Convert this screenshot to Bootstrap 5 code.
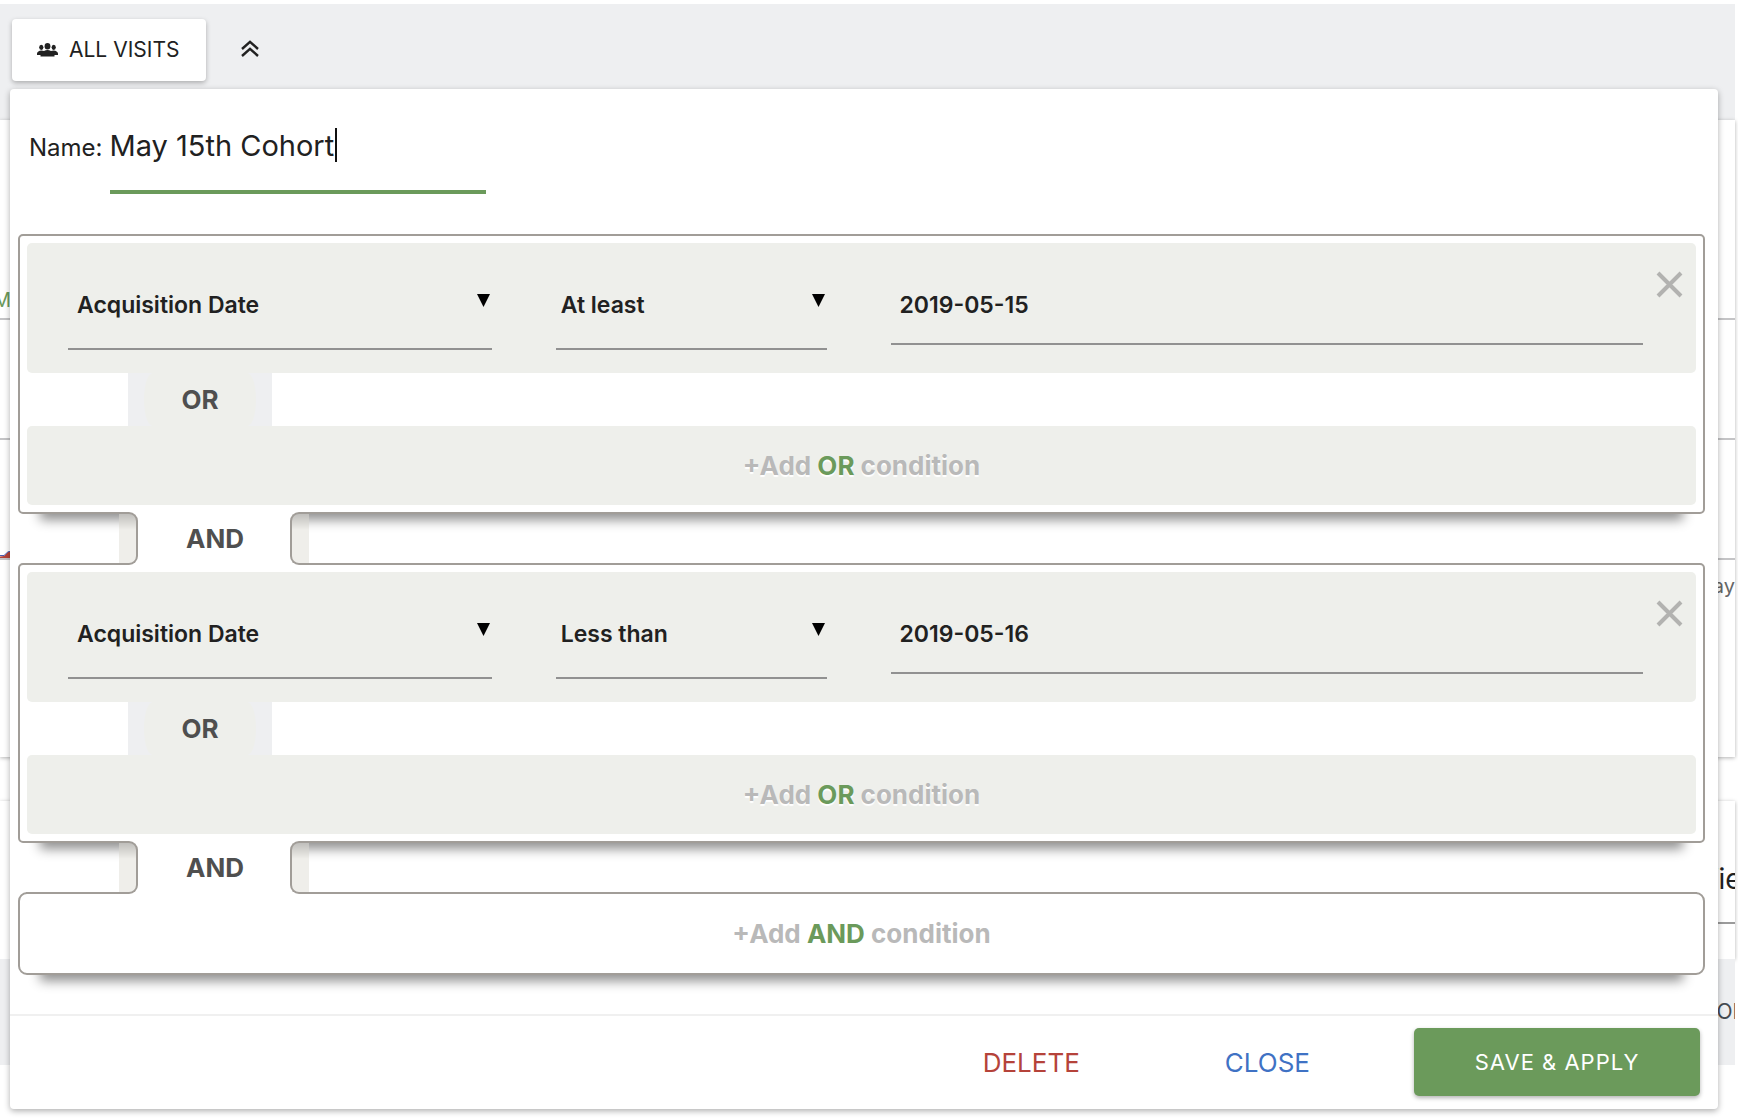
<!DOCTYPE html>
<html lang="en">
<head>
<meta charset="utf-8">
<meta name="viewport" content="width=device-width, initial-scale=1">
<title>Segment editor</title>
<link href="https://cdn.jsdelivr.net/npm/bootstrap@5.3.0/dist/css/bootstrap.min.css" rel="stylesheet">
<style>
:root{--ink:#212121;--green:#6b9a5b;--line:#a19d98;--sand:#eeefeb;--mist:#eeeff1}
body{font-family:Inter,Roboto,sans-serif;color:var(--ink);background:#fff}
.stage{padding:4px 3px 0 0;min-height:100vh}
.topbar{height:116px;background:var(--mist);padding:15px 12px}
.visits-btn{height:62px;padding:0 27px 0 25px;border:0;border-radius:4px;background:#fff;font-size:21px;color:var(--ink);gap:11px;box-shadow:0 2px 5px rgba(0,0,0,.28)}
.collapse-btn{border:0;background:none;padding:0;margin-left:35px;height:56px}
.behind{background:#fff;overflow:hidden;box-shadow:0 1px 4px rgba(0,0,0,.3)}
.chart-bg{height:637px}
.chart-bg .strip{height:120px;border-bottom:2px solid #c4c4c6}
.chart-bg .strip-first{height:200px;padding-bottom:3px;color:var(--green);font-size:20px}
.chart-bg .strip-first span{margin-left:-7px}
.chart-bg .axis{padding-top:11px;color:#666;font-size:20px}
.table-bg{height:158px;margin-top:44px}
.table-bg .strip{height:123px;margin-left:30px;padding-bottom:22px;border-bottom:2px solid #9b9b9b;font-size:28px}
.table-bg .strip span{margin-right:-29px}
.foot-bg{height:106px;background:var(--mist);overflow:hidden;font-size:21px;color:#444a50}
.foot-bg span{margin-right:-11px}
.panel-box{top:89px;left:10px;right:20px;background:#fff;border-radius:4px;box-shadow:0 2px 6px rgba(0,0,0,.32)}
.name-row{padding:26px 19px 40px;gap:7px}
.name-row label{font-size:24px;line-height:66px}
.name-wrap{width:376px}
.name-input{width:100%;height:79px;border:0;border-bottom:4px solid var(--green);padding:0 0 14px;font-size:29px;color:var(--ink);outline:0;background:none}
.caret-bar{left:225px;top:13px;width:2px;height:34px;background:#111}
.editor{padding:0 13px 39px 8px}
.group-box{border:2px solid var(--line);border-radius:5px;padding:7px;background:#fff;position:relative}
.lift{position:relative}
.lift::before{content:"";position:absolute;left:22px;right:22px;bottom:0;height:20px;box-shadow:0 6px 12px rgba(0,0,0,.44)}
.cond{background:var(--sand);border-radius:5px;height:130px;padding:0 53px 0 41px;display:grid;grid-template-columns:424fr 271fr 753fr;column-gap:64px;position:relative}
.fld{position:relative}
.fld select,.fld input{width:100%;height:77px;margin-top:30px;padding:0 9px 10px;border:0;border-bottom:2px solid #919191;background:none;font-size:23px;font-weight:600;color:var(--ink);appearance:none;border-radius:0;outline:0}
.fld.narrow select{padding-left:5px}
.fld input{height:72px;padding-bottom:6px}
.tri{right:2px;top:51px;width:13px;height:13px;pointer-events:none}
.drop-btn{right:13px;top:28px;border:0;background:none;padding:0;line-height:0}
.or-row{height:53px;padding-left:101px}
.or-tab{width:144px;background:var(--mist)}
.or-tab span{display:flex;align-items:center;justify-content:center;width:112px;height:53px;margin:0 auto;background:var(--sand);border-radius:9px/26px}
.joint{font-size:26px;font-weight:700;color:#4f4f4f}
.add-or,.add-and{display:block;width:100%;border:0;font-size:26px;font-weight:700;color:#b9b9b9;text-shadow:0 2px 1px #fff}
.add-or{height:79px;background:var(--sand);border-radius:5px}
.add-and{height:83px;background:#fff;border:2px solid var(--line);border-radius:9px;position:relative}
.add-or b,.add-and b{color:var(--green);font-weight:700}
.and-row{height:53px;margin:-2px 0;padding:0 8px;position:relative;z-index:1}
.and-end{border:2px solid var(--line);z-index:1;background-image:linear-gradient(rgba(0,0,0,.2),transparent),linear-gradient(#efeeea,#efeeea);background-size:17px 16px,17px 100%;background-repeat:no-repeat}
.and-left{width:112px;border-left:0;border-radius:0 9px 9px 0;background-position:right top}
.and-mid{box-sizing:content-box;width:150px;margin:0 -10px;padding:0 10px 0 12px;background:#fff}
.and-right{flex:1;border-right:0;border-radius:9px 0 0 9px;background-position:left top}
.panel-foot{border-top:2px solid #f0f0f0;padding:12px 18px 13px}
.text-btn{border:0;background:none;font-size:26px;padding:0}
.btn-delete{color:#b5433a;margin-right:145px}
.btn-close-panel{color:#3f72c4;margin-right:104px}
.save-btn{width:286px;height:68px;border:0;border-radius:5px;background:var(--green);color:#fff;font-size:22px;letter-spacing:1px;box-shadow:0 2px 4px rgba(0,0,0,.3)}
</style>
</head>
<body>
<div class="stage position-relative overflow-hidden">
  <header class="topbar d-flex align-items-start">
    <button type="button" class="visits-btn d-flex align-items-center">
      <svg width="21" height="14" viewBox="0 0 21 14" fill="#212121" aria-hidden="true"><ellipse cx="10.500" cy="3.200" rx="2.900" ry="3.200"/><ellipse cx="4.300" cy="4.300" rx="2.100" ry="2.600"/><ellipse cx="16.700" cy="4.300" rx="2.100" ry="2.600"/><path d="M0 12V10.500Q.5 8 4.500 7.600L7 8Q10.500 6 14 8l2.500-.4Q20.500 8 21 10.500V12h-3.500v1.500h-14V12Z"/></svg>
      ALL VISITS
    </button>
    <button type="button" class="collapse-btn" aria-label="Collapse">
      <svg width="18" height="17" viewBox="0 0 18 17" fill="none" stroke="#212121" stroke-width="2.400" aria-hidden="true"><path d="M1 9 9 1.800 17 9M1 16 9 8.800 17 16"/></svg>
    </button>
  </header>
  <main>
    <div class="behind chart-bg">
      <div class="strip strip-first d-flex align-items-end"><span>M</span></div>
      <div class="strip"></div>
      <div class="strip d-flex align-items-end"><svg width="12" height="7" viewBox="0 0 12 7" aria-hidden="true"><path d="M0 7V5.500L4 5 8 1l4-1v7Z" fill="#b5433a"/><path d="M0 4.500h4L8 .8 12 0" fill="none" stroke="#4a5cb0"/></svg></div>
      <div class="axis text-end">May</div>
    </div>
    <div class="behind table-bg"><div class="strip d-flex justify-content-end align-items-end"><span>View</span></div></div>
    <div class="foot-bg d-flex align-items-center justify-content-end"><span>FOR</span></div>
  </main>

  <form class="panel-box position-absolute">
    <div class="name-row d-flex align-items-start">
      <label for="segname">Name:</label>
      <div class="name-wrap position-relative">
        <input id="segname" class="name-input" type="text" value="May 15th Cohort">
        <span class="caret-bar position-absolute"></span>
      </div>
    </div>
    <div class="editor">
      <div class="lift"><section class="group-box">
        <div class="cond">
          <div class="fld"><select aria-label="Segment"><option>Acquisition Date</option></select><svg class="tri position-absolute" viewBox="0 0 13 13" aria-hidden="true"><path d="M0 0h13L6.500 13Z"/></svg></div>
          <div class="fld narrow"><select aria-label="Match"><option>At least</option></select><svg class="tri position-absolute" viewBox="0 0 13 13" aria-hidden="true"><path d="M0 0h13L6.500 13Z"/></svg></div>
          <div class="fld"><input type="text" aria-label="Value" value="2019-05-15"></div>
          <button type="button" class="drop-btn position-absolute" aria-label="Remove"><svg width="27" height="27" viewBox="0 0 27 27" stroke="#b2b2b0" stroke-width="4" aria-hidden="true"><path d="M2 2 25 25M25 2 2 25"/></svg></button>
        </div>
        <div class="or-row"><div class="or-tab joint"><span>OR</span></div></div>
        <button type="button" class="add-or">+Add <b>OR</b> condition</button>
      </section></div>
      <div class="and-row d-flex"><div class="and-end and-left position-relative"></div><div class="and-mid joint d-flex align-items-center justify-content-center">AND</div><div class="and-end and-right position-relative"></div></div>
      <div class="lift"><section class="group-box">
        <div class="cond">
          <div class="fld"><select aria-label="Segment"><option>Acquisition Date</option></select><svg class="tri position-absolute" viewBox="0 0 13 13" aria-hidden="true"><path d="M0 0h13L6.500 13Z"/></svg></div>
          <div class="fld narrow"><select aria-label="Match"><option>Less than</option></select><svg class="tri position-absolute" viewBox="0 0 13 13" aria-hidden="true"><path d="M0 0h13L6.500 13Z"/></svg></div>
          <div class="fld"><input type="text" aria-label="Value" value="2019-05-16"></div>
          <button type="button" class="drop-btn position-absolute" aria-label="Remove"><svg width="27" height="27" viewBox="0 0 27 27" stroke="#b2b2b0" stroke-width="4" aria-hidden="true"><path d="M2 2 25 25M25 2 2 25"/></svg></button>
        </div>
        <div class="or-row"><div class="or-tab joint"><span>OR</span></div></div>
        <button type="button" class="add-or">+Add <b>OR</b> condition</button>
      </section></div>
      <div class="and-row d-flex"><div class="and-end and-left position-relative"></div><div class="and-mid joint d-flex align-items-center justify-content-center">AND</div><div class="and-end and-right position-relative"></div></div>
      <div class="lift"><button type="button" class="add-and">+Add <b>AND</b> condition</button></div>
    </div>
    <footer class="panel-foot d-flex justify-content-end align-items-center">
      <button type="button" class="text-btn btn-delete">DELETE</button>
      <button type="button" class="text-btn btn-close-panel">CLOSE</button>
      <button type="submit" class="save-btn">SAVE &amp; APPLY</button>
    </footer>
  </form>
</div>
<script src="https://cdn.jsdelivr.net/npm/bootstrap@5.3.0/dist/js/bootstrap.bundle.min.js"></script>
</body>
</html>
